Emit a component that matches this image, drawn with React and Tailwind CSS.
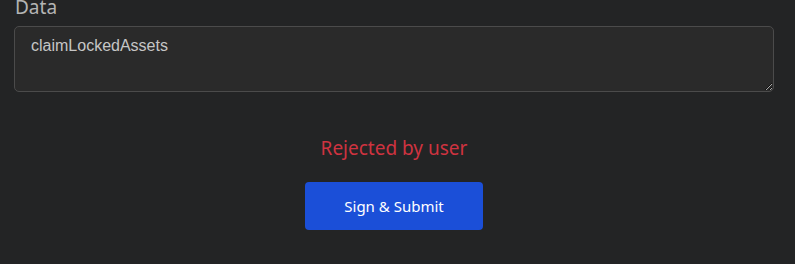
export default function App() {
  return (
    <div className="w-[795px] h-[264px] overflow-hidden bg-[#232425] pl-[14px] pr-[21px]" style={{ fontFamily: '"Noto Sans", "Open Sans", sans-serif' }}>
      <div className="-mt-[6px] pl-[1px] text-[19px] leading-[26px] text-[#b4b4b4]">Data</div>
      <textarea
        className="mt-[6px] block w-[760px] h-[66px] rounded-[5px] border border-[#4b4b4b] bg-[#2a2a2a] px-[16px] pt-[9px] pb-[7px] text-[16px] leading-[20px] text-[#c6c6c6] outline-none"
        style={{ fontFamily: '"Liberation Sans", Arial, sans-serif' }}
        defaultValue="claimLockedAssets"
      />
      <div className="mt-[43px] text-center text-[19px] leading-[26px] text-[#cf3340]">Rejected by user</div>
      <div className="mt-[21px] flex justify-center">
        <button className="w-[178px] h-[48px] rounded-[4px] bg-[#1b4fd8] text-[15px] text-white">Sign &amp; Submit</button>
      </div>
    </div>
  );
}
